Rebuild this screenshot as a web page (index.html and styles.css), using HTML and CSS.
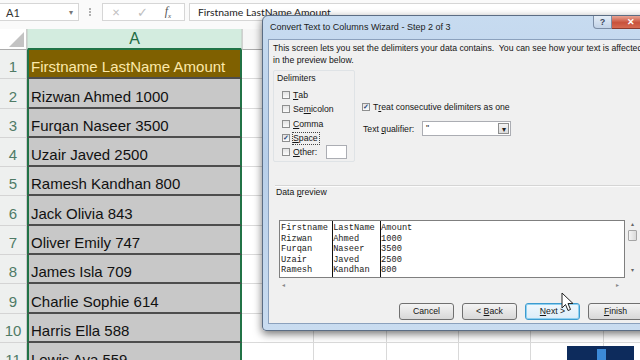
FILE: index.html
```html
<!DOCTYPE html>
<html lang="en">
<head>
	<meta charset="UTF-8">
	<title>Convert Text to Columns</title>
	<link rel="stylesheet" href="styles.css">
</head>
<body>

	<div class="formula-bar">
		<div class="name-box">A1<span class="caret">&#9662;</span></div>
		<div class="grip"></div>
		<div class="fx-buttons"><span>&times;</span><span>&#10003;</span><span class="fx">f<sub>x</sub></span></div>
		<div class="formula">Firstname LastName Amount</div>
	</div>

	<div class="sheet">
		<div class="row head"><div class="num corner"></div><div class="cell-a">A</div><div class="rest"></div></div>
		<div class="row first"><div class="num">1</div><div class="cell-a">Firstname LastName Amount</div><div class="rest"></div></div>
		<div class="row"><div class="num">2</div><div class="cell-a">Rizwan Ahmed 1000</div><div class="rest"></div></div>
		<div class="row"><div class="num">3</div><div class="cell-a">Furqan Naseer 3500</div><div class="rest"></div></div>
		<div class="row"><div class="num">4</div><div class="cell-a">Uzair Javed 2500</div><div class="rest"></div></div>
		<div class="row"><div class="num">5</div><div class="cell-a">Ramesh Kandhan 800</div><div class="rest"></div></div>
		<div class="row"><div class="num">6</div><div class="cell-a">Jack Olivia 843</div><div class="rest"></div></div>
		<div class="row"><div class="num">7</div><div class="cell-a">Oliver Emily 747</div><div class="rest"></div></div>
		<div class="row"><div class="num">8</div><div class="cell-a">James Isla 709</div><div class="rest"></div></div>
		<div class="row"><div class="num">9</div><div class="cell-a">Charlie Sophie 614</div><div class="rest"></div></div>
		<div class="row"><div class="num">10</div><div class="cell-a">Harris Ella 588</div><div class="rest"></div></div>
		<div class="row"><div class="num">11</div><div class="cell-a">Lewis Ava 559</div><div class="rest"></div></div>
	</div>

	<!-- wizard window over the sheet -->
	<div class="dialog">
		<div class="titlebar">
			<span class="title">Convert Text to Columns Wizard - Step 2 of 3</span>
			<div class="win-buttons">
				<span class="help">?</span>
				<span class="close">&#10005;</span>
			</div>
		</div>
		<div class="dlg-body">
			<p class="intro">This screen lets you set the delimiters your data contains.&nbsp; You can see how your text is affected<br>in the preview below.</p>

			<div class="options">
				<div class="delims">
					<div class="group-label">Delimiters</div>
					<label class="check first-check"><span class="box"></span><u>T</u>ab</label>
					<label class="check"><span class="box"></span>Se<u>m</u>icolon</label>
					<label class="check"><span class="box"></span><u>C</u>omma</label>
					<label class="check"><span class="box on">&#10003;</span><span class="focus"><u>S</u>pace</span></label>
					<label class="check"><span class="box"></span><u>O</u>ther:<span class="other-input"></span></label>
				</div>
				<div class="side">
					<label class="check treat"><span class="box on">&#10003;</span>T<u>r</u>eat consecutive delimiters as one</label>
					<div class="qualifier">
						<span class="q-label">Text <u>q</u>ualifier:</span>
						<div class="select">"<span class="drop">&#9662;</span></div>
					</div>
				</div>
			</div>

			<div class="sep"></div>
			<div class="preview-label">Data <u>p</u>review</div>

			<div class="preview">
				<div class="pv-box">
					<div class="pv-col c1">Firstname<br>Rizwan<br>Furqan<br>Uzair<br>Ramesh</div>
					<div class="pv-col c2">LastName<br>Ahmed<br>Naseer<br>Javed<br>Kandhan</div>
					<div class="pv-col c3">Amount<br>1000<br>3500<br>2500<br>800</div>
				</div>
				<div class="vscroll"><span>&#9652;</span><span class="thumb"></span><span>&#9662;</span></div>
				<div class="hscroll"><span>&#9666;</span><span>&#9656;</span></div>
			</div>

			<div class="buttons">
				<span class="btn">Cancel</span>
				<span class="btn">&lt; <u>B</u>ack</span>
				<span class="btn default"><u>N</u>ext &gt;</span>
				<span class="btn"><u>F</u>inish</span>
			</div>
		</div>
	</div>

	<svg class="cursor" width="13" height="20" viewBox="0 0 13 20"><path d="M1 1 L1 16 L4.5 12.5 L7 18.5 L9.5 17.5 L7 11.5 L12 11.5 Z" fill="#fff" stroke="#222" stroke-width="1"/></svg>

	<div class="logo"><span></span></div>

</body>
</html>
```

FILE: styles.css
```css
* { box-sizing: border-box; }
html, body { margin: 0; padding: 0; }
body { position: relative; width: 640px; height: 360px; overflow: hidden; background: #fff; font-family: "Liberation Sans", Arial, sans-serif; color: #111; }

/* formula bar */
.formula-bar { display: flex; align-items: flex-start; height: 29px; padding-top: 3px; background: #fafafa; font-family: Lato, "Liberation Sans", sans-serif; font-size: 11px; color: #333; }
.name-box { display: flex; align-items: center; justify-content: space-between; width: 79px; height: 18px; padding: 0 5px 0 6px; background: #fff; border: 1px solid #d6d6d6; border-left: 0; }
.name-box .caret { font-size: 8px; color: #777; }
.grip { width: 1px; height: 8px; margin: 5px 11px 0 10px; border-left: 2px dotted #b0b0b0; }
.fx-buttons { display: flex; align-items: center; width: 83px; height: 18px; background: #fff; border: 1px solid #d6d6d6; color: #bdbdbd; font-size: 13px; }
.fx-buttons span { width: 26px; text-align: center; }
.fx-buttons .fx { font-family: "Liberation Serif", serif; font-style: italic; color: #555; font-size: 12px; }
.fx-buttons .fx sub { font-size: 7px; }
.formula { flex: 1; height: 18px; margin-left: 4px; padding-left: 8px; line-height: 16px; background: #fff; border: 1px solid #d6d6d6; border-right: 0; color: #222; font-size: 10.4px; }

/* sheet */
.row { display: flex; height: 29.3px; }
.num { flex: none; display: flex; align-items: flex-end; justify-content: center; width: 27px; padding-bottom: 2px; background: #eef0ef; border-bottom: 1px solid #d4d4d4; border-right: 1px solid #cbcbcb; color: #4f7b66; font-size: 15px; line-height: 18px; }
.cell-a { flex: none; display: flex; align-items: flex-end; width: 215px; padding: 0 0 1px 2px; background: #c8c8c8; border-left: 2px solid #217346; border-right: 2px solid #217346; border-bottom: 2px solid #4d4d4d; font-size: 15px; line-height: 18px; white-space: nowrap; }
.rest { flex: 1; border-bottom: 1px solid #dadada; background: repeating-linear-gradient(90deg, transparent 0 71.3px, #d9d9d9 71.3px 72.3px); }

.row.head { height: 21px; }
.head .num { position: relative; background: #fff; border-bottom: 1px solid #ababab; }
.head .num::after { content: ''; position: absolute; right: 2px; bottom: 2px; width: 15px; height: 15px; background: #c3c3c3; clip-path: polygon(100% 0, 100% 100%, 0 100%); }
.head .cell-a { align-items: center; justify-content: center; padding: 0; background: #d3ecdf; border-left: 1px solid #c9d9cf; border-right: 1px solid #c9d9cf; border-bottom: 2px solid #217346; color: #1f6b43; font-size: 16px; }
.head .rest { background: #f6f6f6; border-bottom: 1px solid #ababab; border-left: 1px solid #d0d0d0; }

.first .cell-a { background: #7f6000; color: #fde9a9; }

/* wizard dialog */
.dialog { position: absolute; left: 262px; top: 15px; width: 395px; height: 316px; display: flex; flex-direction: column; padding: 0 5px 6px; background: linear-gradient(#c7dbf0, #b8cfe9 45%, #c9dcf0); border: 1px solid #5b6d84; border-radius: 6px 6px 4px 4px; box-shadow: 0 3px 8px rgba(0, 0, 0, .55); font-size: 8.7px; color: #151515; }
.titlebar { flex: none; display: flex; height: 23px; }
.title { padding: 5px 0 0 2px; line-height: 12px; font-size: 9px; color: #1a1a1a; }
.win-buttons { display: flex; height: 13px; margin-left: auto; }
.help { width: 19px; text-align: center; line-height: 12px; font-size: 9px; font-weight: bold; color: #3b4a5e; background: linear-gradient(#e4edf7, #c2d3e7); border: 1px solid #7c8ea6; border-top: 0; border-radius: 0 0 0 4px; }
.close { width: 39px; text-align: center; line-height: 12px; font-size: 9px; font-weight: bold; color: #fff; background: linear-gradient(#e9a393, #c8523c 55%, #d66a52); border: 1px solid #8a3a2e; border-top: 0; border-left: 0; }

.dlg-body { flex: 1; background: #f0f0f0; border: 1px solid #8ba1bd; }
.intro { margin: 0; padding: 2px 0 0 4px; line-height: 12px; white-space: nowrap; }

.options { display: flex; margin-top: 4px; }
.delims { width: 82px; height: 92px; margin-left: 4px; padding: 1px 0 0 3px; border: 1px solid #dfe3e6; border-radius: 2px; }
.group-label { line-height: 12px; }
.check { display: flex; align-items: center; height: 14.3px; padding-left: 5px; }
.first-check { margin-top: 4px; }
.box { flex: none; width: 8px; height: 8px; margin-right: 3px; background: linear-gradient(#e3e3e3, #fbfbfb); border: 1px solid #8e8f8f; font-size: 7px; line-height: 6px; text-align: center; color: #2b4a7a; font-weight: bold; }
.focus { outline: 1px dotted #444; outline-offset: 0; padding: 0 1px 0 0; line-height: 11px; }
.other-input { width: 21px; height: 14px; margin-left: 9px; background: #fff; border: 1px solid #abadb3; }

.side { margin-left: 7px; }
.check.treat { margin-top: 31px; padding-left: 0; height: 12px; }
.qualifier { display: flex; align-items: center; margin-top: 8px; padding-left: 1px; }
.q-label { width: 59px; flex: none; }
.select { position: relative; width: 89px; height: 15px; padding: 1px 0 0 3px; background: #fff; border: 1px solid #abadb3; line-height: 11px; }
.drop { position: absolute; right: 1px; top: 1px; width: 11px; height: 11px; line-height: 11px; text-align: center; font-size: 8px; color: #222; background: linear-gradient(#f4f4f4, #dcdcdc); border: 1px solid #8e8f8f; }

.sep { margin: 23px 0 0 6px; border-top: 1px solid #d5d5d5; border-bottom: 1px solid #fcfcfc; }
.preview-label { padding-left: 7px; line-height: 10px; }

.preview { display: grid; grid-template-columns: 346px 13px; grid-template-rows: 58px 12px; margin: 23px 0 0 10px; }
.pv-box { display: flex; background: #fff; border: 1px solid #7f7f7f; font-family: "Liberation Mono", "Courier New", monospace; font-size: 8.7px; line-height: 10.5px; color: #222; }
.pv-col { padding-top: 2px; white-space: nowrap; }
.pv-col.c1 { width: calc(10ch + 1px); padding-left: 1px; border-right: 1px solid #111; }
.pv-col.c2 { width: calc(9ch + 1px); border-right: 1px solid #111; }
.vscroll { display: flex; flex-direction: column; align-items: center; padding-left: 2px; font-size: 6px; color: #666; }
.vscroll .thumb { width: 9px; height: 11px; margin: 3px 0 25px; background: linear-gradient(90deg, #f4f4f4, #dadada); border: 1px solid #a5a5a5; border-radius: 1px; }
.hscroll { display: flex; justify-content: space-between; align-items: center; padding: 0 6px 0 3px; font-size: 6px; color: #888; }

.buttons { display: flex; gap: 8px; margin: 13px 0 0 130px; }
.btn { flex: none; width: 55px; height: 17px; line-height: 15px; text-align: center; background: linear-gradient(#f4f4f4, #e6e6e6 50%, #d8d8d8); border: 1px solid #707070; border-radius: 3px; }
.btn.default { background: linear-gradient(#f0f8fd, #dcecf8); border-color: #3d9bcf; box-shadow: inset 0 0 0 1px #8fd0f0; }

/* overlays */
.cursor { position: absolute; left: 561px; top: 292px; }
.logo { position: absolute; left: 567px; top: 346px; width: 67px; height: 14px; background: #0d2b5c; }
.logo span { display: block; width: 9px; height: 12px; margin: 3px 0 0 30px; background: #3c8ad8; }
```
